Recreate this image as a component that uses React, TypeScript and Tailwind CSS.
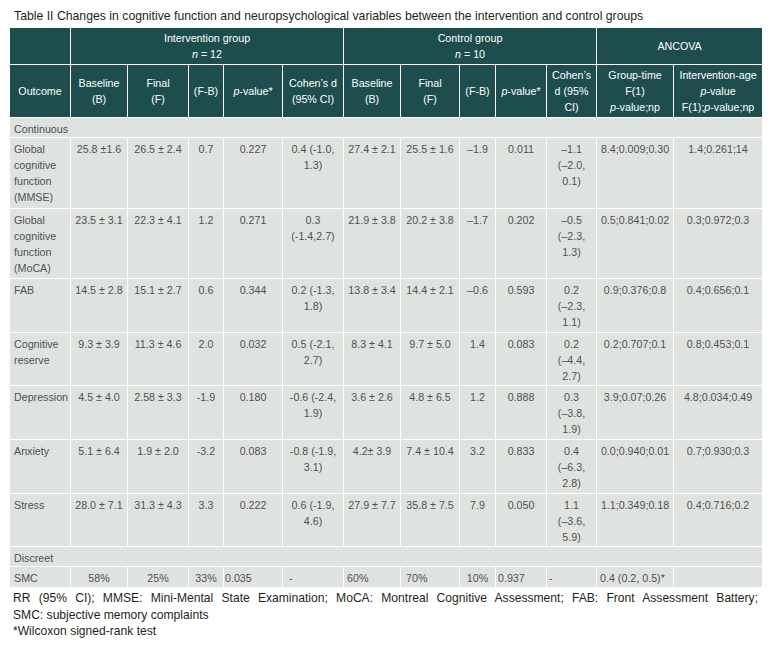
import React from "react";

type Cell = string | string[];
interface Row {
  o: string[];
  h: string;
  c: Cell[];
}

const rows: Row[] = [
  {
    o: ["Global", "cognitive", "function", "(MMSE)"],
    h: "h-[71px]",
    c: ["25.8 ±1.6", "26.5 ± 2.4", "0.7", "0.227", ["0.4 (-1.0,", "1.3)"], "27.4 ± 2.1", "25.5 ± 1.6", "–1.9", "0.011", ["–1.1", "(–2.0,", "0.1)"], "8.4;0.009;0.30", "1.4;0.261;14"],
  },
  {
    o: ["Global", "cognitive", "function", "(MoCA)"],
    h: "h-[70px]",
    c: ["23.5 ± 3.1", "22.3 ± 4.1", "1.2", "0.271", ["0.3", "(-1.4,2.7)"], "21.9 ± 3.8", "20.2 ± 3.8", "–1.7", "0.202", ["–0.5", "(–2.3,", "1.3)"], "0.5;0.841;0.02", "0.3;0.972;0.3"],
  },
  {
    o: ["FAB"],
    h: "h-[54px]",
    c: ["14.5 ± 2.8", "15.1 ± 2.7", "0.6", "0.344", ["0.2 (-1.3,", "1.8)"], "13.8 ± 3.4", "14.4 ± 2.1", "–0.6", "0.593", ["0.2", "(–2.3,", "1.1)"], "0.9;0.376;0.8", "0.4;0.656;0.1"],
  },
  {
    o: ["Cognitive", "reserve"],
    h: "h-[53px]",
    c: ["9.3 ± 3.9", "11.3 ± 4.6", "2.0", "0.032", ["0.5 (-2.1,", "2.7)"], "8.3 ± 4.1", "9.7 ± 5.0", "1.4", "0.083", ["0.2", "(–4.4,", "2.7)"], "0.2;0.707;0.1", "0.8;0.453;0.1"],
  },
  {
    o: ["Depression"],
    h: "h-[54px]",
    c: ["4.5 ± 4.0", "2.58 ± 3.3", "-1.9", "0.180", ["-0.6 (-2.4,", "1.9)"], "3.6 ± 2.6", "4.8 ± 6.5", "1.2", "0.888", ["0.3", "(–3.8,", "1.9)"], "3.9;0.07;0.26", "4.8;0.034;0.49"],
  },
  {
    o: ["Anxiety"],
    h: "h-[54px]",
    c: ["5.1 ± 6.4", "1.9 ± 2.0", "-3.2", "0.083", ["-0.8 (-1.9,", "3.1)"], "4.2± 3.9", "7.4 ± 10.4", "3.2", "0.833", ["0.4", "(–6.3,", "2.8)"], "0.0;0.940;0.01", "0.7;0.930;0.3"],
  },
  {
    o: ["Stress"],
    h: "h-[53px]",
    c: ["28.0 ± 7.1", "31.3 ± 4.3", "3.3", "0.222", ["0.6 (-1.9,", "4.6)"], "27.9 ± 7.7", "35.8 ± 7.5", "7.9", "0.050", ["1.1", "(–3.6,", "5.9)"], "1.1;0.349;0.18", "0.4;0.716;0.2"],
  },
];

const Lines = ({ v }: { v: Cell }) =>
  Array.isArray(v) ? (
    <>
      {v.map((l, i) => (
        <React.Fragment key={i}>
          {i > 0 && <br />}
          {l}
        </React.Fragment>
      ))}
    </>
  ) : (
    <>{v}</>
  );

const TH = "border border-white text-center align-middle px-[1px] font-normal";
const TD = "border border-white text-center align-top pt-[3px] pb-0 px-[1px] whitespace-nowrap";

export default function App() {
  return (
    <div className="bg-white w-[777px] h-[648px] text-[#231f20]" style={{ fontFamily: '"Liberation Sans", Arial, sans-serif' }}>
      <div className="pt-[8px] pl-[14px] mb-[3px] text-[12.25px] leading-[16px] whitespace-nowrap">
        Table II Changes in cognitive function and neuropsychological variables between the intervention and control groups
      </div>
      <table className="ml-[9px] w-[753px] table-fixed border-collapse text-[10.7px] leading-[16px]">
        <colgroup>
          <col className="w-[61px]" />
          <col className="w-[57px]" />
          <col className="w-[61px]" />
          <col className="w-[35px]" />
          <col className="w-[59px]" />
          <col className="w-[61px]" />
          <col className="w-[57px]" />
          <col className="w-[59px]" />
          <col className="w-[36px]" />
          <col className="w-[51px]" />
          <col className="w-[50px]" />
          <col className="w-[77px]" />
          <col className="w-[89px]" />
        </colgroup>
        <thead className="bg-[#1e4d4e] text-white">
          <tr className="h-[37px]">
            <th className={TH}></th>
            <th className={TH} colSpan={5}>
              Intervention group
              <br />
              <i>n</i> = 12
            </th>
            <th className={TH} colSpan={5}>
              Control group
              <br />
              <i>n</i> = 10
            </th>
            <th className={TH} colSpan={2}>
              ANCOVA
            </th>
          </tr>
          <tr className="h-[53px]">
            <th className={TH}>Outcome</th>
            <th className={TH}>
              Baseline
              <br />
              (B)
            </th>
            <th className={TH}>
              Final
              <br />
              (F)
            </th>
            <th className={TH}>(F-B)</th>
            <th className={TH}>
              <i>p</i>-value*
            </th>
            <th className={TH}>
              Cohen’s d
              <br />
              (95% CI)
            </th>
            <th className={TH}>
              Baseline
              <br />
              (B)
            </th>
            <th className={TH}>
              Final
              <br />
              (F)
            </th>
            <th className={TH}>(F-B)</th>
            <th className={TH}>
              <i>p</i>-value*
            </th>
            <th className={TH}>
              Cohen’s
              <br />d (95%
              <br />
              CI)
            </th>
            <th className={TH}>
              Group-time
              <br />
              F(1)
              <br />
              <i>p</i>-value;np
            </th>
            <th className={TH}>
              Intervention-age
              <br />
              <i>p</i>-value
              <br />
              F(1);<i>p</i>-value;np
            </th>
          </tr>
        </thead>
        <tbody className="bg-[#dfe3e0] text-[#505050]">
          <tr className="h-[20px]">
            <td className={`${TD} text-left pl-[4px]`} colSpan={13}>
              Continuous
            </td>
          </tr>
          {rows.map((r, i) => (
            <tr key={i} className={r.h}>
              <td className={`${TD} text-left pl-[4px]`}>
                <Lines v={r.o} />
              </td>
              {r.c.map((c, j) => (
                <td key={j} className={TD}>
                  <Lines v={c} />
                </td>
              ))}
            </tr>
          ))}
          <tr className="h-[20px]">
            <td className={`${TD} text-left pl-[4px]`} colSpan={13}>
              Discreet
            </td>
          </tr>
          <tr className="h-[21px]">
            <td className={`${TD} text-left pl-[4px]`}>SMC</td>
            <td className={TD}>58%</td>
            <td className={TD}>25%</td>
            <td className={TD}>33%</td>
            <td className={`${TD} text-left pl-[1px]`}>0.035</td>
            <td className={`${TD} text-left pl-[6px]`}>-</td>
            <td className={`${TD} text-left pl-[3px]`}>60%</td>
            <td className={`${TD} text-left pl-[5px]`}>70%</td>
            <td className={TD}>10%</td>
            <td className={`${TD} text-left pl-[2px]`}>0.937</td>
            <td className={`${TD} text-left pl-[2px]`}>-</td>
            <td className={`${TD} text-left pl-[3px]`}>0.4 (0.2, 0.5)*</td>
            <td className={TD}></td>
          </tr>
        </tbody>
      </table>
      <div className="ml-[13px] w-[745px] mt-[2px] text-[12.1px] leading-[16.5px]">
        <p className="text-justify [text-align-last:justify]">
          RR (95% CI); MMSE: Mini-Mental State Examination; MoCA: Montreal Cognitive Assessment; FAB: Front Assessment Battery;
        </p>
        <p>SMC: subjective memory complaints</p>
        <p>*Wilcoxon signed-rank test</p>
      </div>
    </div>
  );
}
